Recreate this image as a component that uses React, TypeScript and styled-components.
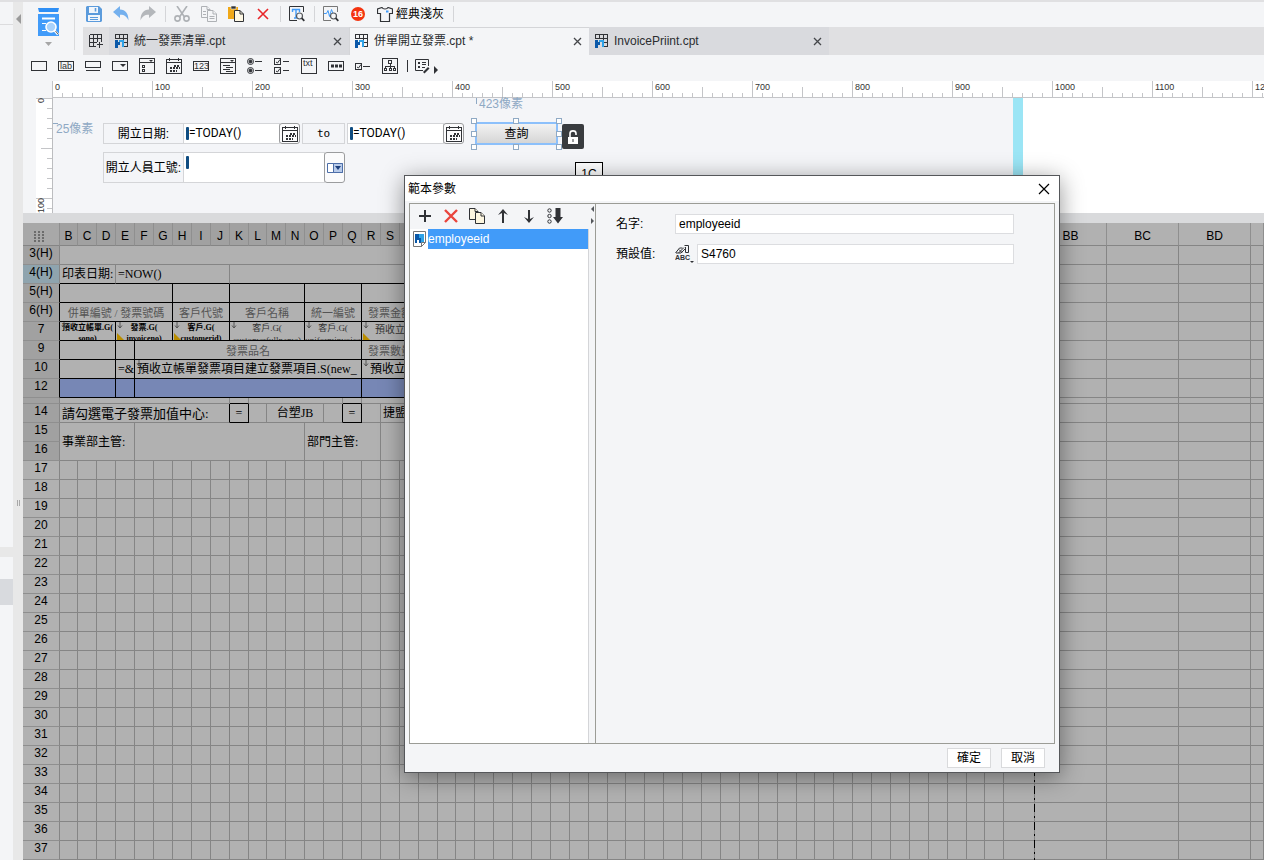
import React, { useEffect, useState } from "react";
import styled, { createGlobalStyle, css } from "styled-components";

const SANS = '"Liberation Sans", "Noto Sans CJK TC", sans-serif';
const SERIF = '"Liberation Serif", "Noto Sans CJK TC", serif';

const GlobalStyle = createGlobalStyle`
  * { box-sizing: border-box; }
  html, body { margin: 0; height: 100%; }
  body { font: 12px/16px ${SANS}; color: #222; background: #f4f5f7; overflow: hidden; }
  button, input { font: inherit; color: inherit; margin: 0; padding: 0; border: 0; background: none; border-radius: 0; outline: 0; }
  svg { display: block; flex: none; }
`;

/* ---------- frame ---------- */

const Window = styled.div`
  position: relative;
  height: 100vh;
  display: flex;
  border-top: 2px solid #e0e0e2;
  overflow: hidden;
`;

const SidePanel = styled.aside`
  width: 13px;
  flex: none;
  display: flex;
  flex-direction: column;
`;

const SideBlock = styled.div<{ $h?: number; $tone?: string; $line?: boolean }>`
  ${(p) => (p.$h ? `height: ${p.$h}px;` : "flex: 1;")}
  background: ${(p) => p.$tone || "#f4f5f7"};
  ${(p) => p.$line && "border-bottom: 1px solid #dcdcde;"}
`;

const Splitter = styled.div`
  width: 10px;
  flex: none;
  background: #e8e8e8;
  display: flex;
  flex-direction: column;
  align-items: center;
  padding-top: 12px;
`;

const Grip = styled.div`
  width: 3px;
  height: 6px;
  margin-top: 476px;
  border: solid #a8a8a8;
  border-width: 0 1px;
`;

const Main = styled.main`
  flex: 1;
  min-width: 0;
  display: flex;
  flex-direction: column;
`;

/* ---------- header ---------- */

const Header = styled.header`
  display: flex;
  height: 53px;
  flex: none;
`;

const PreviewButton = styled.button`
  width: 52px;
  height: 42px;
  margin-top: 6px;
  display: flex;
  flex-direction: column;
  align-items: center;
  gap: 6px;
  border-right: 1px solid #d9dadc;
`;

const HeaderRight = styled.div`
  flex: 1;
  min-width: 0;
  padding-left: 8px;
`;

const Toolbar = styled.div`
  display: flex;
  align-items: center;
  gap: 11px;
  height: 24px;
  margin-bottom: 1px;
  padding-left: 3px;
`;

const ToolButton = styled.button`
  display: flex;
  align-items: center;
  gap: 3px;
  height: 18px;
  color: #000;
`;

const Sep = styled.span`
  width: 1px;
  height: 16px;
  margin: 0 -3px 0 -2px;
  background: #d4d5d8;
`;

const Badge = styled.span`
  width: 14px;
  height: 14px;
  margin: 0 1px;
  border-radius: 7px;
  background: #f4330f;
  color: #fff;
  font: bold 9px/14px ${SANS};
  text-align: center;
`;

const TabBar = styled.div`
  display: flex;
  height: 28px;
  background: #e0e0e2;
`;

const AddTab = styled.button`
  width: 26px;
  display: flex;
  align-items: center;
  justify-content: center;
`;

const Tab = styled.div<{ $active?: boolean }>`
  width: 240px;
  display: flex;
  align-items: center;
  padding: 0 7px 0 6px;
  gap: 5px;
  color: #2b2d30;
  background: ${(p) => (p.$active ? "#f4f5f7" : "#d9dade")};
  ${(p) => p.$active && "box-shadow: inset 1px 1px #d4d5d8;"}
`;

const TabTitle = styled.span`
  flex: 1;
  white-space: nowrap;
`;

const TabClose = styled.button`
  display: flex;
`;

const WidgetBar = styled.div`
  height: 26px;
  flex: none;
  display: flex;
  align-items: center;
  gap: 11px;
  padding: 0 0 4px 8px;
`;

const WidgetButton = styled.button`
  display: flex;
`;

const MoreGroup = styled.div`
  display: flex;
  align-items: center;
  gap: 6px;
  margin-left: -2px;
`;

/* ---------- rulers and designer ---------- */

const RulerRow = styled.div`
  height: 17px;
  flex: none;
  margin-left: 29px;
  display: flex;
  overflow: hidden;
  background: linear-gradient(#c4c5c8, #c4c5c8) bottom / 100% 1px no-repeat, #fff;
`;

const RulerUnit = styled.div`
  width: 100px;
  flex: none;
  padding-left: 3px;
  font: 9px/13px ${SANS};
  color: #333;
  background:
    linear-gradient(90deg, #c4c5c8 1px, transparent 1px) 0 0 / 100px 16px no-repeat,
    linear-gradient(90deg, #c4c5c8 1px, transparent 1px) 50px 6px / 50px 10px no-repeat,
    linear-gradient(90deg, #c4c5c8 1px, transparent 1px) 0 12px / 10px 4px repeat-x;
`;

const Designer = styled.div`
  height: 115px;
  flex: none;
  display: flex;
  padding-left: 13px;
`;

const VRuler = styled.div`
  width: 16px;
  flex: none;
  overflow: hidden;
  background: #fff;
`;

const VRulerUnit = styled.div`
  height: 100px;
  font: 9px/10px ${SANS};
  color: #333;
  background:
    linear-gradient(#c4c5c8 1px, transparent 1px) 0 0 / 16px 100px no-repeat,
    linear-gradient(#c4c5c8 1px, transparent 1px) 5px 50px / 11px 50px no-repeat,
    linear-gradient(#c4c5c8 1px, transparent 1px) 11px 0 / 5px 10px repeat-y;
  &:last-child { height: 15px; }
  span {
    display: block;
    width: 10px;
    writing-mode: vertical-rl;
    transform: rotate(180deg);
  }
`;

const Canvas = styled.div`
  position: relative;
  width: 961px;
  flex: none;
  border-left: 1px solid #bcbdc0;
  background: #f4f5f8;
`;

const CanvasEdge = styled.div`
  width: 10px;
  background: #9be5f5;
`;

const CanvasRest = styled.div`
  flex: 1;
  background: #fff;
`;

type Box = { $x: number; $y: number; $w?: number; $h?: number };
const place = css<Box>`
  position: absolute;
  left: ${(p) => p.$x}px;
  top: ${(p) => p.$y}px;
  ${(p) => p.$w && `width: ${p.$w}px;`}
  ${(p) => p.$h && `height: ${p.$h}px;`}
`;

const Guide = styled.span<Box & { $side: string }>`
  ${place}
  color: #8fa9c4;
  line-height: 14px;
  padding-left: 3px;
  &::before {
    content: "";
    position: absolute;
    left: 0;
    top: 1px;
    ${(p) => (p.$side === "top" ? "width: 1px; height: 6px;" : "width: 5px; height: 1px;")}
    background: #8fa9c4;
  }
`;

const FieldLabel = styled.label<Box & { $mono?: boolean }>`
  ${place}
  border: 1px solid #d4d5d8;
  display: flex;
  align-items: center;
  justify-content: center;
  color: #000;
  white-space: nowrap;
  ${(p) => p.$mono && 'font: 11px/16px "DejaVu Sans Mono", monospace;'}
`;

const FieldWrap = styled.div<Box>`
  ${place}
  border: 1px solid #d4d5d8;
  background: #fff;
  padding: 3px 2px;
  display: flex;
  input { flex: 1; min-width: 0; height: 13px; color: #000; font: 12px/13px Roboto, "Liberation Sans", sans-serif; }
`;

const Caret = styled.i`
  width: 3px;
  height: 13px;
  background: #0f4c81;
  border-radius: 1px;
`;

const FieldButton = styled.button<Box>`
  ${place}
  display: flex;
  align-items: center;
  justify-content: center;
  border: 1px solid #9b9c9e;
  border-radius: 3px;
  background: #fbfbfc;
`;

const QueryButton = styled.button<Box>`
  ${place}
  border: 2px solid #8cc0fb;
  background: linear-gradient(#f2f2f2, #d6d6d6);
  color: #000;
  line-height: 18px;
`;

const Handle = styled.i<Box>`
  ${place}
  width: 6px;
  height: 6px;
  border: 1px solid #8fa9c4;
  background: #fff;
`;

const LockButton = styled.button<Box>`
  ${place}
  display: flex;
  align-items: center;
  justify-content: center;
  background: #393c3f;
  border-radius: 2px;
`;

const Tag = styled.div<Box>`
  ${place}
  border: 1px solid #000;
  background: #fff;
  color: #000;
  text-align: center;
  line-height: 22px;
`;

const PaneBar = styled.div`
  height: 10px;
  flex: none;
  background: #d9dadc;
`;

/* ---------- sheet ---------- */

const SheetPane = styled.section`
  position: relative;
  flex: 1;
  min-height: 0;
  overflow: hidden;
  background: #b1b1b1;
`;

const Sheet = styled.table`
  width: 100%;
  table-layout: fixed;
  border-collapse: separate;
  border-spacing: 0;
  color: #000;
`;

const Col = styled.col<{ $w?: number }>`
  ${(p) => p.$w && `width: ${p.$w}px;`}
`;

const ColHead = styled.th<{ $dark?: boolean; $small?: boolean }>`
  height: 23px;
  padding: 3px 0 0;
  font-weight: normal;
  font-size: ${(p) => (p.$small ? 10 : 12)}px;
  line-height: 16px;
  text-align: center;
  background: ${(p) => (p.$dark ? "#a1a1a1" : "#b1b1b1")};
  border-right: 1px solid #8f8f8f;
  border-bottom: 1px solid #858585;
`;

const Corner = styled.th`
  height: 23px;
  padding: 4px 0 0 11px;
  background: #a8a8a8;
  border-right: 1px solid #8f8f8f;
  border-bottom: 1px solid #858585;
`;

const RowHead = styled.th<{ $tone: string; $black?: boolean }>`
  padding: 0;
  font-weight: normal;
  line-height: 15px;
  text-align: center;
  vertical-align: top;
  background: ${(p) => p.$tone};
  border-right: 1px solid ${(p) => (p.$black ? "#000" : "#858585")};
  border-bottom: 1px solid #8f8f8f;
`;

const RowLabel = styled.div<{ $h: number }>`
  height: ${(p) => p.$h}px;
`;

const Cell = styled.td<{ $r?: boolean; $b?: boolean; $bg?: string }>`
  position: relative;
  padding: 0;
  background: ${(p) => p.$bg || "transparent"};
  border-right: 1px solid ${(p) => (p.$r ? "#000" : "#858585")};
  border-bottom: 1px solid ${(p) => (p.$b ? "#000" : "#858585")};
`;

type Look = "body" | "title" | "tiny" | "tinyBold" | "small" | "big";
const looks: Record<Look, string> = {
  body: "font-size: 12px; line-height: 18px; padding-left: 2px;",
  title: "font-size: 11px; line-height: 20px; color: #555; text-align: center;",
  tiny: "font-size: 9px; line-height: 12px; color: #333; text-align: center;",
  tinyBold: "font-size: 8px; line-height: 11px; font-weight: bold; text-align: center;",
  small: "font-size: 10px; line-height: 16px; color: #333; padding-left: 13px;",
  big: "font-size: 13px; line-height: 20px; padding-left: 2px;",
};

const CellText = styled.div<{ $look: Look; $h: number; $center?: boolean }>`
  height: ${(p) => p.$h}px;
  overflow: hidden;
  white-space: pre;
  font-family: ${SERIF};
  ${(p) => looks[p.$look]}
  ${(p) => p.$center && "text-align: center; padding: 0;"}
`;

const Mark = styled.svg<{ $bottom?: boolean }>`
  position: absolute;
  left: 1px;
  ${(p) => (p.$bottom ? "bottom: 0;" : "top: 0;")}
`;

const PageBreak = styled.div`
  position: absolute;
  left: 1011px;
  top: 23px;
  bottom: 0;
  width: 1px;
  background: repeating-linear-gradient(#000 0 8px, #858585 8px 12px, #000 12px 14px, #858585 14px 18px);
`;

type CellSpec = {
  n: number;
  t?: string;
  look?: Look;
  center?: boolean;
  r?: boolean;
  b?: boolean;
  bg?: string;
  arrow?: boolean;
  tri?: boolean;
  rows?: number;
};
type RowSpec = { label: string; h?: number; tone?: string; black?: boolean; cells: CellSpec[] };

const K = { r: true, b: true };
const tail: CellSpec[] = [{ n: 1 }, { n: 1 }, { n: 1 }, { n: 1 }];
const BLUE = "#7787b5";

const rows: RowSpec[] = [
  { label: "3(H)", cells: [{ n: 51 }, ...tail] },
  {
    label: "4(H)",
    tone: "#8fa4ae",
    cells: [{ n: 3, t: "印表日期:", b: true }, { n: 6, t: "=NOW()", b: true }, { n: 42, b: true }, ...tail],
  },
  { label: "5(H)", black: true, cells: [{ n: 6, ...K }, { n: 3, ...K }, { n: 4, ...K }, { n: 3, ...K }, { n: 35, ...K }, ...tail] },
  {
    label: "6(H)",
    black: true,
    cells: [
      { n: 6, t: "併單編號 / 發票號碼", look: "title", ...K },
      { n: 3, t: "客戶代號", look: "title", ...K },
      { n: 4, t: "客戶名稱", look: "title", ...K },
      { n: 3, t: "統一編號", look: "title", ...K },
      { n: 3, t: "發票金額", look: "title", ...K },
      { n: 32, ...K },
      ...tail,
    ],
  },
  {
    label: "7",
    black: true,
    cells: [
      { n: 3, t: "預收立帳單.G(\nsono)", look: "tinyBold", arrow: true, ...K },
      { n: 3, t: "發票.G(\ninvoiceno)", look: "tinyBold", arrow: true, tri: true, ...K },
      { n: 3, t: "客戶.G(\ncustomerid)", look: "tinyBold", arrow: true, tri: true, ...K },
      { n: 4, t: "客戶.G(\ncustomerfullname)", look: "tiny", arrow: true, ...K },
      { n: 3, t: "客戶.G(\nuniforminvoice", look: "tiny", arrow: true, ...K },
      { n: 35, t: "預收立帳\n單.G(", look: "small", arrow: true, tri: true, ...K },
      ...tail,
    ],
  },
  {
    label: "9",
    black: true,
    cells: [{ n: 3, ...K }, { n: 1, ...K }, { n: 12, t: "發票品名", look: "title", ...K }, { n: 3, t: "發票數量", look: "title", ...K }, { n: 32, ...K }, ...tail],
  },
  {
    label: "10",
    black: true,
    cells: [
      { n: 3, ...K },
      { n: 1, t: "=&", ...K },
      { n: 12, t: "預收立帳單發票項目建立發票項目.S(new_", arrow: true, ...K },
      { n: 35, t: "  預收立帳單\n  發票項目", arrow: true, ...K },
      ...tail,
    ],
  },
  {
    label: "12",
    black: true,
    cells: [{ n: 3, bg: BLUE, ...K }, { n: 1, bg: BLUE, ...K }, { n: 12, bg: BLUE, ...K }, { n: 35, bg: BLUE, ...K }, ...tail],
  },
  { label: "", h: 6, cells: [{ n: 9, r: false }, { n: 1, b: true }, { n: 5 }, { n: 1, b: true }, { n: 35 }, ...tail] },
  {
    label: "14",
    cells: [
      { n: 9, t: "請勾選電子發票加值中心:", look: "big", r: true },
      { n: 1, t: "=", center: true, ...K },
      { n: 1 },
      { n: 3, t: "台塑JB", center: true },
      { n: 1, r: true },
      { n: 1, t: "=", center: true, ...K },
      { n: 1 },
      { n: 34, t: "捷盟" },
      ...tail,
    ],
  },
  {
    label: "15",
    cells: [{ n: 4, t: "事業部主管:", rows: 2 }, { n: 9, rows: 2 }, { n: 4, t: "部門主管:", rows: 2 }, { n: 34, rows: 2 }, ...tail],
  },
  { label: "16", cells: tail },
  ...Array.from({ length: 21 }, (_, i) => ({
    label: String(17 + i),
    tone: "#b1b1b1",
    cells: Array.from({ length: 55 }, () => ({ n: 1 })),
  })),
];

const narrow = [0, 10, 20, 29, 39, 48];
const letters = "ABCDEFGHIJKLMNOPQRSTUVWXYZ";
const colName = (i: number) => (i < 26 ? letters[i] : "A" + letters[i - 26]);

function SheetRow({ row }: { row: RowSpec }) {
  const h = row.h || 19;
  return (
    <tr>
      <RowHead scope="row" $tone={row.tone || "#a1a1a1"} $black={row.black}>
        <RowLabel $h={h - 1}>{row.label}</RowLabel>
      </RowHead>
      {row.cells.map((c, i) => (
        <Cell key={i} colSpan={c.n} rowSpan={c.rows} $r={c.r} $b={c.b} $bg={c.bg}>
          {c.arrow && (
            <Mark width="6" height="8" viewBox="0 0 6 8">
              <path d="M3 0v6M1 3.5L3 6l2-2.5" stroke="#555" fill="none" />
            </Mark>
          )}
          {c.tri && (
            <Mark $bottom width="7" height="7" viewBox="0 0 7 7">
              <path d="M0 0l7 7H0z" fill="#b98d00" />
            </Mark>
          )}
          {c.t && (
            <CellText $look={c.look || "body"} $h={h - 1} $center={c.center}>
              {c.t}
            </CellText>
          )}
        </Cell>
      ))}
    </tr>
  );
}

/* ---------- dialog ---------- */

const Dialog = styled.section`
  position: absolute;
  left: 404px;
  top: 173px;
  width: 656px;
  height: 598px;
  border: 1px solid #55575a;
  background: #f4f5f7;
  box-shadow: 0 4px 22px rgba(0, 0, 0, 0.42);
  display: flex;
  flex-direction: column;
  color: #000;
`;

const DialogTitle = styled.header`
  height: 25px;
  flex: none;
  background: #fff;
  display: flex;
  align-items: center;
  justify-content: space-between;
  padding: 0 9px 0 3px;
  h2 { margin: 0; font-size: 12px; font-weight: normal; }
  button { display: flex; }
`;

const DialogBody = styled.div`
  flex: 1;
  margin: 2px 4px 0;
  border: 1px solid #9b9c96;
  display: flex;
`;

const ListPane = styled.div`
  width: 179px;
  flex: none;
  display: flex;
  flex-direction: column;
`;

const ListTools = styled.div`
  height: 25px;
  flex: none;
  display: flex;
  align-items: center;
  gap: 10px;
  padding: 0 0 2px 7px;
  button { display: flex; }
`;

const ParamList = styled.ul`
  flex: 1;
  margin: 0;
  padding: 0 0 0 2px;
  list-style: none;
  background: #fff;
  border-right: 1px solid #d4d5d8;
`;

const ParamItem = styled.li`
  display: flex;
  align-items: center;
  gap: 1px;
  height: 20px;
  span { flex: 1; height: 20px; line-height: 20px; background: #419bf9; color: #fff; }
`;

const Collapser = styled.div`
  width: 7px;
  flex: none;
  border-right: 1px solid #9b9c96;
  padding: 2px 0 0 1px;
  display: flex;
  flex-direction: column;
  gap: 6px;
`;

const Form = styled.form`
  flex: 1;
  padding: 10px 40px 0 20px;
  display: flex;
  flex-direction: column;
  gap: 10px;
`;

const FormRow = styled.div`
  display: flex;
  align-items: center;
  height: 20px;
  label { width: 59px; }
  input { flex: 1; height: 20px; padding: 0 3px; border: 1px solid #dcdde0; background: #fff; }
`;

const TypeButton = styled.button`
  width: 22px;
  display: flex;
`;

const DialogFooter = styled.footer`
  height: 28px;
  flex: none;
  display: flex;
  justify-content: flex-end;
  align-items: flex-start;
  gap: 10px;
  padding: 4px 14px 0 0;
`;

const DialogButton = styled.button`
  width: 44px;
  height: 20px;
  border: 1px solid #d9dadc;
  background: #fff;
  line-height: 17px;
`;

/* ---------- icons ---------- */

const Svg = ({ w = 16, h = 16, children }: { w?: number; h?: number; children: React.ReactNode }) => (
  <svg width={w} height={h} viewBox={`0 0 ${w} ${h}`} fill="none" stroke="#303236" aria-hidden="true">
    {children}
  </svg>
);

const Lens = ({ x = 9, y = 9 }: { x?: number; y?: number }) => (
  <>
    <circle cx={x} cy={y} r="3" fill="#f4f5f7" stroke="#55585c" strokeWidth="1.2" />
    <path d={`M${x + 2.2} ${y + 2.2}l2.6 2.6`} stroke="#303236" strokeWidth="1.8" />
  </>
);

const PreviewIcon = () => (
  <Svg w={21} h={28}>
    <path d="M0 0h21l-1 4H1z" fill="#2f8ff5" stroke="none" />
    <path d="M0 6h21v22H0z" fill="#419bf9" stroke="none" />
    <path d="M4 10.5h13" stroke="#fff" strokeWidth="2" />
    <path d="M4 15.5h4M4 22.5h4" stroke="#fff" />
    <circle cx="13" cy="19" r="5" fill="#a9d2fb" stroke="#fff" strokeWidth="1.6" />
    <path d="M16.5 22.5l3.5 4" stroke="#fff" strokeWidth="2.4" />
    <path d="M17.5 23l2.5 3.2" stroke="#666" />
  </Svg>
);

const SaveIcon = () => (
  <Svg>
    <path d="M1 0h12l3 3v12l-1 1H1l-1-1V1z" fill="#5b9bdc" stroke="none" />
    <path d="M3 1h9v6H3zM2 9h12v6H2z" fill="#f2f6fb" stroke="none" />
    <path d="M9.5 2v3.5" stroke="#5b9bdc" strokeWidth="1.6" />
    <path d="M4 11.5h8M4 13.5h8" stroke="#5b9bdc" />
  </Svg>
);

const UndoIcon = ({ flip }: { flip?: boolean }) => (
  <Svg>
    <g transform={flip ? "matrix(-1 0 0 1 16 0)" : undefined}>
      <path d="M0 6l7-6v3.5c5.5.3 8.5 4 8.500 11-1.800-4-4-5.800-8.500-5.700V12z" fill={flip ? "#b4b7bb" : "#74b0ee"} stroke="none" />
    </g>
  </Svg>
);

const CutIcon = () => (
  <Svg>
    <g stroke="#aeb1b5" strokeWidth="1.6">
      <path d="M3 0l7.5 11M13 0L5.500 11" />
      <circle cx="3.5" cy="12.5" r="2.6" />
      <circle cx="12.5" cy="12.5" r="2.6" />
    </g>
  </Svg>
);

const CopyIcon = ({ c = "#aeb1b5", fill = "#f4f5f7" }: { c?: string; fill?: string }) => (
  <Svg>
    <g stroke={c} fill={fill}>
      <path d="M.5.5H6l3 3v8H.5z" />
      <path d="M6 .5v3h3" />
      <path d="M6.5 4.5H12l3.500 3.500v7.500h-9z" />
      <path d="M12 4.500V8h3.500" />
      {fill === "#f4f5f7" && <path d="M2 5.500h3M2 8.500h3M8.500 10.500h5M8.500 12.500h5" />}
    </g>
  </Svg>
);

const PasteIcon = () => (
  <Svg>
    <path d="M0 1h10v12H0z" fill="#f0a818" stroke="none" />
    <path d="M3 0h5v3H3z" fill="#303236" stroke="#f4f5f7" strokeWidth=".6" />
    <path d="M6.5 4.5H12l3.500 3.500v7.500h-9z" fill="#fff8e4" />
    <path d="M12 4.500V8h3.500" />
  </Svg>
);

const Cross = ({ s = 12, c = "#e8262a", w = 1.6 }: { s?: number; c?: string; w?: number }) => (
  <Svg w={s} h={s}>
    <path d={`M1 1L${s - 1} ${s - 1}M${s - 1} 1L1 ${s - 1}`} stroke={c} strokeWidth={w} />
  </Svg>
);

const FindTextIcon = () => (
  <Svg>
    <path d="M14.500 6V.5H.5v14H8" />
    <path d="M3 3.500h8M7 3.500v9M5 12h4M3.500 3v3M10.500 3v3" stroke="#419bf9" strokeWidth="1.400" />
    <Lens x={10.5} y={10} />
  </Svg>
);

const MonitorIcon = () => (
  <Svg>
    <path d="M14.500 6V.5H.5v14H8" stroke="#777" />
    <path d="M1 7.500h2.500L5 4.500l1.500 6 2-7 1.500 4h3" stroke="#419bf9" />
    <Lens x={10.5} y={10} />
  </Svg>
);

const ShirtIcon = () => (
  <Svg w={16} h={15}>
    <path d="M5 .5c1 2 5 2 6 0L15.500 2v4.500h-3v8h-9v-8h-3V2z" strokeWidth="1.200" />
    <path d="M9 4.500h2.500" stroke="#419bf9" strokeWidth="2" />
  </Svg>
);

const GridIcon = ({ add }: { add?: boolean }) => (
  <Svg w={14} h={14}>
    <g shapeRendering="crispEdges">
      {add ? (
        <path d="M.5.500h12v7M.5.500v12h6M.5 4.500h12M.5 8.500h7M4.500.500v12M8.500.500v7M10.500 8v6M7.500 10.500h6" />
      ) : (
        <>
          <path d="M.5 5V.5h12v12h-4M.5 4.500h12M4.500.5v4M8.500.5v12M8.500 8.500h4" />
          <path d="M0 6h3v2h2v3H3v3H0z" fill="#0a58a8" stroke="none" />
          <path d="M4 6h5v7H7V8H4z" fill="#2ea3e8" stroke="none" />
        </>
      )}
    </g>
  </Svg>
);

const Crisp = ({ d, children }: { d: string; children?: React.ReactNode }) => (
  <Svg>
    <g shapeRendering="crispEdges">
      <path d={d} />
    </g>
    {children}
  </Svg>
);

const IconText = styled.text<{ $small?: boolean }>`
  font: ${(p) => (p.$small ? "bold 7px" : "9px")} ${SANS};
  fill: #303236;
  stroke: none;
`;

const Calendar = () => (
  <Crisp d="M.5 1.500h15v14H.5zM.5 4.500h15M3.500 0v3M12.500 0v3">
    <path d="M8 7.500h5M4 10h10M4 13h7" strokeWidth="2" strokeDasharray="2 1" shapeRendering="crispEdges" />
  </Crisp>
);

const Down = ({ x, y, s = 3 }: { x: number; y: number; s?: number }) => (
  <path d={`M${x - s} ${y}h${s * 2}l-${s} ${s}z`} fill="#303236" stroke="none" />
);

const widgets: [string, React.ReactNode][] = [
  ["文字框", <Crisp d="M.5 3.500h15v9H.5z" />],
  ["標籤", <Crisp d="M.5 3.500h15v9H.5z"><IconText x="2" y="11">lab</IconText></Crisp>],
  ["按鈕", <Crisp d="M.5 3.500h15v6H.5zM1 12.500h14" />],
  ["下拉框", <Crisp d="M.5 3.500h15v9H.5z"><Down x={11} y={6} /></Crisp>],
  ["下拉核取框", <Crisp d="M.5.500h15v15H.5zM.5 4.500h15M3.500 7.500h2v2h-2zM3.500 11.500h2v2h-2z"><Down x={12} y={2} s={2} /></Crisp>],
  ["日期", <Calendar />],
  ["數字", <Crisp d="M.5 3.500h15v9H.5z"><IconText x="1" y="11">123</IconText></Crisp>],
  ["下拉樹", <Crisp d="M.5.500h15v15H.5zM.5 4.500h15M3 7.500h7M6 9.500h7M3 11.500h7M6 13.500h7"><Down x={12} y={2} s={2} /></Crisp>],
  ["選項按鈕", <Svg><circle cx="3.5" cy="3.5" r="3" /><circle cx="3.5" cy="3.5" r="1.5" fill="#303236" /><circle cx="3.5" cy="12.5" r="3" /><circle cx="3.5" cy="12.5" r="1.5" fill="#303236" /><path d="M8 3.500h7M8 12.500h7" /></Svg>],
  ["核取方塊組", <Crisp d="M.5.500h6v6h-6zM.5 9.500h6v6h-6zM9 3.500h6M9 12.500h6"><path d="M2 4l1.500 1L6 1.500M2 13l1.500 1L6 10.500" /></Crisp>],
  ["文字區域", <Crisp d="M.5.500h15v15H.5z"><IconText x="2" y="8">txt</IconText></Crisp>],
  ["密碼", <Crisp d="M.5 3.500h15v9H.5z"><path d="M3 8h11" strokeWidth="3" strokeDasharray="3 1" /></Crisp>],
  ["核取方塊", <Crisp d="M.5 5.500h6v6h-6zM8 8.500h7"><path d="M2 9l1.500 1L6 6.500" /></Crisp>],
  ["樹", <Crisp d="M.5.500h15v15H.5zM6.500 2.500h3v3h-3zM8.500 6v2M3.500 10V8.500h9V10M8.500 8v2M2.500 10.500h2v2h-2zM7.500 10.500h2v2h-2zM11.500 10.500h2v2h-2z" />],
];

const TriIcon = ({ d, w, h, c = "#8a8b8e" }: { d: string; w: number; h: number; c?: string }) => (
  <svg width={w} height={h} viewBox={`0 0 ${w} ${h}`} fill={c} aria-hidden="true">
    <path d={d} />
  </svg>
);

const tabs = [
  { title: "統一發票清單.cpt" },
  { title: "併單開立發票.cpt *", active: true },
  { title: "InvoicePriint.cpt" },
];

const handles = [
  [418, 20], [460, 20], [503, 20],
  [418, 33], [503, 33],
  [418, 46], [460, 46], [503, 46],
];

function useRulerUnits() {
  const [units, setUnits] = useState(() => Math.ceil((window.innerWidth - 52) / 100));
  useEffect(() => {
    const update = () => setUnits(Math.ceil((window.innerWidth - 52) / 100));
    window.addEventListener("resize", update);
    return () => window.removeEventListener("resize", update);
  }, []);
  return units;
}

export default function App() {
  const units = useRulerUnits();
  return (
    <Window>
      <GlobalStyle />
      <SidePanel>
        <SideBlock $h={23} $line />
        <SideBlock $h={522} />
        <SideBlock $h={10} $tone="#e8e8e8" />
        <SideBlock $h={22} />
        <SideBlock $h={26} $tone="#d8dade" />
        <SideBlock />
      </SidePanel>
      <Splitter>
        <TriIcon d="M5 0v10L0 5z" w={5} h={10} c="#9a9a9a" />
        <Grip />
      </Splitter>

      <Main>
        <Header>
          <PreviewButton aria-label="預覽">
            <PreviewIcon />
            <TriIcon d="M0 0h7L3.500 4z" w={7} h={4} c="#a6a6a6" />
          </PreviewButton>
          <HeaderRight>
            <Toolbar>
              <ToolButton aria-label="儲存"><SaveIcon /></ToolButton>
              <ToolButton aria-label="復原"><UndoIcon /></ToolButton>
              <ToolButton aria-label="重做"><UndoIcon flip /></ToolButton>
              <Sep />
              <ToolButton aria-label="剪下"><CutIcon /></ToolButton>
              <ToolButton aria-label="複製"><CopyIcon /></ToolButton>
              <ToolButton aria-label="貼上"><PasteIcon /></ToolButton>
              <ToolButton aria-label="刪除"><Svg><path d="M3 3l10 10M13 3L3 13" stroke="#e8262a" strokeWidth="1.6" /></Svg></ToolButton>
              <Sep />
              <ToolButton aria-label="尋找"><FindTextIcon /></ToolButton>
              <Sep />
              <ToolButton aria-label="效能"><MonitorIcon /></ToolButton>
              <Badge>16</Badge>
              <ToolButton><ShirtIcon />經典淺灰</ToolButton>
              <Sep />
            </Toolbar>
            <TabBar>
              <AddTab aria-label="新增範本"><GridIcon add /></AddTab>
              {tabs.map((t) => (
                <Tab key={t.title} $active={t.active}>
                  <GridIcon />
                  <TabTitle>{t.title}</TabTitle>
                  <TabClose aria-label="關閉"><Cross s={9} c="#44464a" w={1.3} /></TabClose>
                </Tab>
              ))}
            </TabBar>
          </HeaderRight>
        </Header>

        <WidgetBar>
          {widgets.map(([name, icon]) => (
            <WidgetButton key={name} aria-label={name}>{icon}</WidgetButton>
          ))}
          <MoreGroup>
            <Svg w={2} h={12}><path d="M.5 0v12" /></Svg>
            <WidgetButton aria-label="更多元件">
              <Svg w={24} h={16}>
                <path d="M13.500 8V1.500H.5v11H8" />
                <path d="M3 5h2M3 9h2" strokeWidth="2" />
                <path d="M7 4.500h4M7 6.500h4M7 9.500h3" />
                <path d="M8 14l5-5 1.500 1.500-5 5z" fill="#303236" stroke="none" />
                <path d="M19 8v8l4-4z" fill="#303236" stroke="none" />
              </Svg>
            </WidgetButton>
          </MoreGroup>
        </WidgetBar>

        <RulerRow>
          {Array.from({ length: units }, (_, i) => (
            <RulerUnit key={i}>{i * 100}</RulerUnit>
          ))}
        </RulerRow>
        <Designer>
          <VRuler>
            <VRulerUnit><span>0</span></VRulerUnit>
            <VRulerUnit><span>100</span></VRulerUnit>
          </VRuler>
          <Canvas>
            <Guide $x={423} $y={-1} $side="top">423像素</Guide>
            <Guide $x={0} $y={24} $side="left">25像素</Guide>
            <FieldLabel htmlFor="from" $x={50} $y={25} $w={81} $h={21}>開立日期:</FieldLabel>
            <FieldWrap $x={130} $y={25} $w={97} $h={21}><Caret /><input id="from" defaultValue="=TODAY()" /></FieldWrap>
            <FieldButton aria-label="選擇日期" $x={226} $y={25} $w={21} $h={21}><Calendar /></FieldButton>
            <FieldLabel htmlFor="until" $mono $x={249} $y={25} $w={43} $h={21}>to</FieldLabel>
            <FieldWrap $x={294} $y={25} $w={97} $h={21}><Caret /><input id="until" defaultValue="=TODAY()" /></FieldWrap>
            <FieldButton aria-label="選擇日期" $x={390} $y={25} $w={21} $h={21}><Calendar /></FieldButton>
            <FieldLabel htmlFor="staff" $x={50} $y={54} $w={81} $h={31}>開立人員工號:</FieldLabel>
            <FieldWrap $x={130} $y={54} $w={142} $h={31}><Caret /><input id="staff" /></FieldWrap>
            <FieldButton aria-label="展開清單" $x={271} $y={54} $w={21} $h={31}>
              <Svg w={16} h={10}>
                <path d="M.5.500h15v9H.5z" fill="#fff" stroke="#4d6ea8" />
                <path d="M6.500.500h9v9h-9z" fill="#b8cbea" stroke="#4d6ea8" />
                <path d="M8 3h6l-3 4z" fill="#1d3f7c" stroke="none" />
              </Svg>
            </FieldButton>
            <QueryButton $x={422} $y={24} $w={83} $h={23}>查詢</QueryButton>
            {handles.map(([x, y]) => (
              <Handle key={`${x}-${y}`} $x={x} $y={y} />
            ))}
            <LockButton aria-label="鎖定" $x={509} $y={26} $w={22} $h={25}>
              <Svg w={10} h={14}>
                <path d="M0 7h10v7H0z" fill="#fff" stroke="none" />
                <path d="M2 8V3.500C2 0 8 0 8 3.500V5" stroke="#fff" strokeWidth="1.600" />
                <path d="M5 9v3" stroke="#393c3f" />
              </Svg>
            </LockButton>
            <Tag $x={522} $y={64} $w={28} $h={24}>1C</Tag>
          </Canvas>
          <CanvasEdge />
          <CanvasRest />
        </Designer>
        <PaneBar />

        <SheetPane>
          <Sheet>
            <colgroup>
              <Col $w={37} />
              {Array.from({ length: 50 }, (_, i) => (
                <Col key={i} $w={narrow.includes(i) ? 18 : 19} />
              ))}
              <Col $w={31} />
              <Col $w={72} />
              <Col $w={72} />
              <Col $w={72} />
              <Col />
            </colgroup>
            <thead>
              <tr>
                <Corner>
                  <Svg w={11} h={11}>
                    <path d="M0 1h10M0 4h10M0 7h10M0 10h10" stroke="#6c6c6c" strokeWidth="2" strokeDasharray="2 2" shapeRendering="crispEdges" />
                  </Svg>
                </Corner>
                {Array.from({ length: 50 }, (_, i) => (
                  <ColHead key={i} scope="col" $dark $small={i > 24}>{colName(i + 1)}</ColHead>
                ))}
                {["BA", "BB", "BC", "BD", ""].map((n) => (
                  <ColHead key={n} scope="col">{n}</ColHead>
                ))}
              </tr>
            </thead>
            <tbody>
              {rows.map((r, i) => (
                <SheetRow key={i} row={r} />
              ))}
            </tbody>
          </Sheet>
          <PageBreak />
        </SheetPane>
      </Main>

      <Dialog role="dialog" aria-labelledby="dialog-title">
        <DialogTitle>
          <h2 id="dialog-title">範本參數</h2>
          <button aria-label="關閉"><Cross s={12} c="#000" w={1.2} /></button>
        </DialogTitle>
        <DialogBody>
          <ListPane>
            <ListTools>
              <button aria-label="新增"><Svg><path d="M8 2v12M2 8h12" strokeWidth="2" /></Svg></button>
              <button aria-label="刪除"><Svg><path d="M2 2l12 12M14 2L2 14" stroke="#e9453d" strokeWidth="2.400" /></Svg></button>
              <button aria-label="複製"><CopyIcon c="#303236" fill="#fdf6e0" /></button>
              <button aria-label="上移"><Svg><path d="M8 15V3" strokeWidth="2" /><path d="M3 7l5-6 5 6-5-2.500z" fill="#303236" stroke="none" /></Svg></button>
              <button aria-label="下移"><Svg><path d="M8 2v11" strokeWidth="2" /><path d="M3 9l5 6 5-6-5 2.500z" fill="#303236" stroke="none" /></Svg></button>
              <button aria-label="排序">
                <Svg>
                  <circle cx="2.5" cy="2.5" r="1.7" /><circle cx="2.5" cy="8" r="1.7" /><circle cx="2.5" cy="13.5" r="1.7" />
                  <path d="M8.500 0h5v9H16l-5 6.500L6 9h2.500z" fill="#303236" stroke="none" />
                </Svg>
              </button>
            </ListTools>
            <ParamList>
              <ParamItem>
                <Svg w={15} h={16}>
                  <path d="M1.500.500h12v11l-4 4h-8z" fill="#fff" stroke="#777" />
                  <path d="M3 3h4v4h2v5H7V9H5v3H3z" fill="#0a58a8" stroke="none" />
                  <path d="M7 3h5v9H9V7H7z" fill="#2ea3e8" stroke="none" />
                  <path d="M13.500 11.500h-4v4z" fill="#fff" stroke="#777" />
                </Svg>
                <span>employeeid</span>
              </ParamItem>
            </ParamList>
          </ListPane>
          <Collapser>
            <TriIcon d="M4 0v6L1 3z" w={5} h={6} c="#55585c" />
            <TriIcon d="M1 0v6l3-3z" w={5} h={6} c="#55585c" />
          </Collapser>
          <Form>
            <FormRow>
              <label htmlFor="param-name">名字:</label>
              <input id="param-name" defaultValue="employeeid" />
            </FormRow>
            <FormRow>
              <label htmlFor="param-value">預設值:</label>
              <TypeButton type="button" aria-label="值類型">
                <Svg w={20} h={20}>
                  <path d="M.5 9l4-5h3M3.500 9L9 3.500M6 9l4-4M4 5.500l3 3M1 9h5M9.500 1.500h4v7h-3V3" />
                  <IconText $small x="0" y="16">ABC</IconText>
                  <Down x={17} y={17} s={2} />
                </Svg>
              </TypeButton>
              <input id="param-value" defaultValue="S4760" />
            </FormRow>
          </Form>
        </DialogBody>
        <DialogFooter>
          <DialogButton>確定</DialogButton>
          <DialogButton>取消</DialogButton>
        </DialogFooter>
      </Dialog>
    </Window>
  );
}
